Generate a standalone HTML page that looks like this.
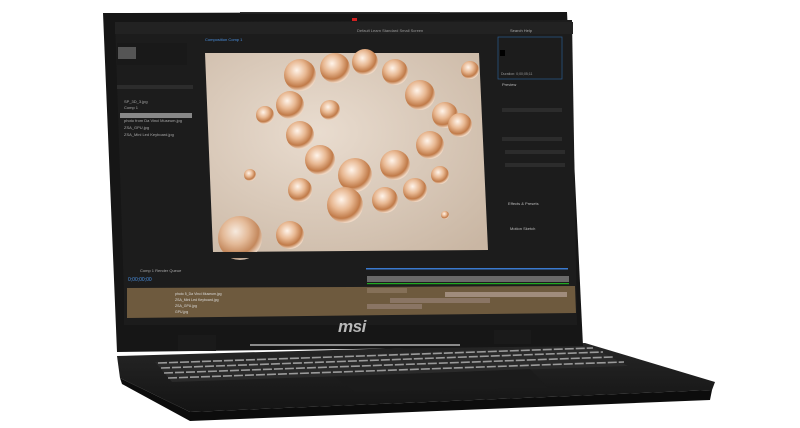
<!DOCTYPE html>
<html><head><style>html,body{margin:0;padding:0;background:#fff;width:800px;height:428px;overflow:hidden}svg{display:block}</style></head>
<body>
<svg width="800" height="428" viewBox="0 0 800 428" xmlns="http://www.w3.org/2000/svg" font-family="Liberation Sans, sans-serif">
<defs>
<radialGradient id="bg" cx="0.4" cy="0.4" r="0.8"><stop offset="0" stop-color="#e9dccf"/><stop offset="1" stop-color="#c9b6a3"/></radialGradient>
<radialGradient id="ball" cx="0.4" cy="0.35" r="0.65"><stop offset="0" stop-color="#fff4ea"/><stop offset="0.45" stop-color="#e8b892"/><stop offset="0.8" stop-color="#c07a48"/><stop offset="1" stop-color="#f0d8c4"/></radialGradient>
<linearGradient id="base" x1="0" y1="0" x2="0" y2="1"><stop offset="0" stop-color="#262626"/><stop offset="1" stop-color="#141414"/></linearGradient>
</defs>
<!-- base -->
<polygon points="117,356 585,343 715,382 712,390 190,412 120,378" fill="url(#base)"/>
<polygon points="120,378 190,412 712,390 710,400 190,421 122,384" fill="#0c0c0c"/>
<!-- keyboard -->
<polygon points="155,362 590,346 628,366 172,382" fill="#2a2a2a"/>
<g stroke="#9a9a9a" stroke-width="1.6" stroke-dasharray="9 2">
<line x1="158" y1="363" x2="593" y2="348"/><line x1="161" y1="368" x2="603" y2="352"/><line x1="164" y1="373" x2="613" y2="357"/><line x1="168" y1="378" x2="624" y2="362"/>
</g>
<polygon points="335,377 530,369 548,388 355,392" fill="#1b1b1b"/>
<!-- lid -->
<polygon points="103,13 567,12 583,346 117,352" fill="#161616"/>
<polygon points="115,22 572,20 577,325 125,325" fill="#1c1c1c"/>
<!-- toolbar -->
<rect x="115" y="22" width="458" height="12" fill="#222"/>
<rect x="240" y="12" width="200" height="1.5" fill="#2a2a2a"/>
<rect x="352" y="18" width="5" height="3" fill="#d02020"/>
<text x="357" y="32" font-size="4" fill="#999">Default   Learn   Standard   Small Screen</text>
<text x="510" y="32" font-size="4" fill="#aaa">Search Help</text>
<!-- left panel -->
<rect x="117" y="43" width="70" height="22" fill="#191919"/>
<rect x="118" y="47" width="18" height="12" fill="#555"/>
<rect x="117" y="85" width="76" height="4" fill="#2c2c2c"/>
<rect x="120" y="113" width="72" height="5" fill="#888"/>
<text x="124" y="103" font-size="4" fill="#aaa">SP_3D_3.jpg</text>
<text x="124" y="109" font-size="4" fill="#aaa">Comp 1</text>
<text x="124" y="122" font-size="4" fill="#aaa">photo from Da Vinci Museum.jpg</text>
<text x="124" y="129" font-size="4" fill="#aaa">ZSA_GPU.jpg</text>
<text x="124" y="136" font-size="4" fill="#aaa">ZSA_Mini Led Keyboard.jpg</text>
<text x="205" y="41" font-size="4" fill="#4a90e0">Composition Comp 1</text>
<!-- canvas -->
<polygon points="205,53 479,53 488,250 213,252" fill="url(#bg)"/>
<g fill="url(#ball)">
<circle cx="300" cy="75" r="16"/><circle cx="335" cy="68" r="15"/><circle cx="365" cy="62" r="13"/>
<circle cx="395" cy="72" r="13"/><circle cx="420" cy="95" r="15"/><circle cx="445" cy="115" r="13"/>
<circle cx="290" cy="105" r="14"/><circle cx="300" cy="135" r="14"/><circle cx="320" cy="160" r="15"/>
<circle cx="355" cy="175" r="17"/><circle cx="395" cy="165" r="15"/><circle cx="430" cy="145" r="14"/>
<circle cx="460" cy="125" r="12"/><circle cx="345" cy="205" r="18"/><circle cx="385" cy="200" r="13"/>
<circle cx="415" cy="190" r="12"/><circle cx="300" cy="190" r="12"/><circle cx="265" cy="115" r="9"/>
<circle cx="470" cy="70" r="9"/><circle cx="240" cy="238" r="22" opacity="0.8"/><circle cx="290" cy="235" r="14"/>
<circle cx="440" cy="175" r="9"/><circle cx="445" cy="215" r="4"/><circle cx="330" cy="110" r="10"/><circle cx="250" cy="175" r="6"/>
</g>
<rect x="205" y="252" width="280" height="6" fill="#1c1c1c"/>
<!-- right panel -->
<rect x="498" y="37" width="64" height="42" fill="#1c1c1c" stroke="#2a5a90" stroke-width="0.7"/>
<rect x="500" y="50" width="5" height="6" fill="#000"/>
<text x="501" y="75" font-size="3.5" fill="#999">Duration: 0;00;05;11</text>
<text x="502" y="86" font-size="4" fill="#bbb">Preview</text>
<rect x="502" y="108" width="60" height="4" fill="#2c2c2c"/>
<rect x="502" y="137" width="60" height="4" fill="#2c2c2c"/>
<rect x="505" y="150" width="60" height="4" fill="#2c2c2c"/>
<rect x="505" y="163" width="60" height="4" fill="#2c2c2c"/>
<text x="508" y="205" font-size="4" fill="#bbb">Effects &amp; Presets</text>
<text x="510" y="230" font-size="4" fill="#bbb">Motion Sketch</text>
<!-- timeline -->
<rect x="124" y="262" width="450" height="63" fill="#1c1c1c"/>
<text x="140" y="272" font-size="4" fill="#aaa">Comp 1       Render Queue</text>
<text x="128" y="281" font-size="5" fill="#4a90e0">0;00;00;00</text>
<rect x="366" y="268" width="202" height="1.5" fill="#3a7ad0"/>
<rect x="367" y="276" width="202" height="6" fill="#6a6a6a"/>
<rect x="367" y="283" width="202" height="1.2" fill="#2a2"/>
<polygon points="127,288 575,286 576,313 127,318" fill="#6e5a3e"/>
<rect x="367" y="288" width="40" height="5" fill="#857058"/>
<rect x="445" y="292" width="122" height="5" fill="#a08c7c"/>
<rect x="390" y="298" width="100" height="5" fill="#8a7564"/>
<rect x="367" y="304" width="55" height="5" fill="#8a7564"/>
<g font-size="3.5" fill="#ddd">
<text x="175" y="295">photo 5_Da Vinci Museum.jpg</text><text x="175" y="301">ZSA_Mini Led Keyboard.jpg</text>
<text x="175" y="307">ZSA_GPU.jpg</text><text x="175" y="313">GPU.jpg</text>
</g>
<!-- hinges & logo -->
<rect x="178" y="335" width="38" height="16" fill="#1a1a1a"/>
<rect x="494" y="330" width="37" height="14" fill="#1a1a1a"/>
<rect x="250" y="344" width="210" height="2" fill="#8a8a8a"/>
<text x="338" y="332" font-size="17" font-weight="bold" font-style="italic" fill="#b8b8b8" letter-spacing="-0.5">msi</text>
</svg>
</body></html>
